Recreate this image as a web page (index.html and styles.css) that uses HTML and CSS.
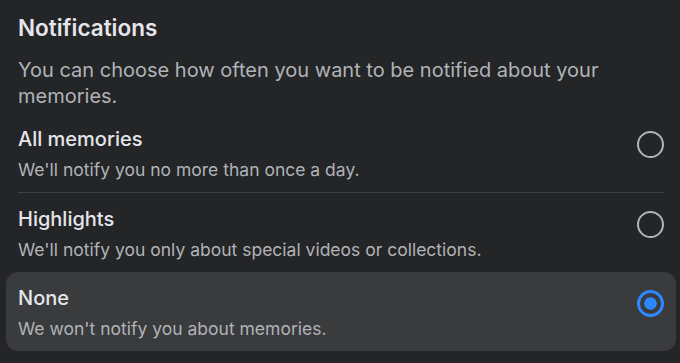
FILE: index.html
```html
<!DOCTYPE html>
<html>
<head>
<meta charset="utf-8">
<link rel="stylesheet" href="styles.css">
</head>
<body>
<div class="panel">
  <div class="header">
    <h1 class="title">Notifications</h1>
    <p class="desc">You can choose how often you want to be notified about your memories.</p>
  </div>
  <div class="options">
    <div class="option">
      <div class="option-inner divided">
        <div class="text">
          <div class="opt-title">All memories</div>
          <div class="opt-sub">We'll notify you no more than once a day.</div>
        </div>
        <span class="radio"></span>
      </div>
    </div>
    <div class="option">
      <div class="option-inner">
        <div class="text">
          <div class="opt-title">Highlights</div>
          <div class="opt-sub">We'll notify you only about special videos or collections.</div>
        </div>
        <span class="radio"></span>
      </div>
    </div>
    <div class="option selected">
      <div class="option-inner">
        <div class="text">
          <div class="opt-title">None</div>
          <div class="opt-sub">We won't notify you about memories.</div>
        </div>
        <span class="radio checked"></span>
      </div>
    </div>
  </div>
</div>
</body>
</html>
```
FILE: styles.css
```css
html, body {
  margin: 0;
  padding: 0;
  background: #242527;
}
body {
  font-family: Inter, "Noto Sans", "Liberation Sans", sans-serif;
  color: #e4e6eb;
  width: 680px;
  height: 363px;
  overflow: hidden;
}
.panel {
  padding: 0 4px 0 6px;
}
.header {
  padding: 14px 12px 0 12px;
}
.title {
  margin: 0;
  font-size: 22.5px;
  line-height: 28px;
  font-weight: 600;
  color: #e4e6eb;
}
.desc {
  margin: 15px 0 0 0;
  font-size: 20px;
  line-height: 26px;
  color: #b0b3b8;
  max-width: 610px;
}
.options {
  margin-top: 4px;
  display: flex;
  flex-direction: column;
}
.option {
  padding: 0 12px;
  border-radius: 12px;
}
.option.selected {
  background: #3a3b3d;
}
.option-inner {
  display: flex;
  align-items: flex-start;
  justify-content: space-between;
  padding: 14px 0 11px 0;
}
.option-inner.divided {
  border-bottom: 1px solid #3e4042;
}
.text {
  display: flex;
  flex-direction: column;
  gap: 8px;
}
.opt-title {
  font-size: 20px;
  line-height: 24px;
  font-weight: 500;
  color: #e4e6eb;
}
.opt-sub {
  font-size: 17.5px;
  line-height: 22px;
  color: #b0b3b8;
}
.radio {
  box-sizing: border-box;
  width: 27px;
  height: 27px;
  border-radius: 50%;
  border: 2px solid #b0b3b8;
  margin-top: 4px;
  margin-right: 0;
  flex: none;
}
.radio.checked {
  border: 3px solid #2d88ff;
  padding: 4px;
  background: #2d88ff;
  background-clip: content-box;
  box-shadow: inset 0 0 0 4px #3a3b3d;
}
```
